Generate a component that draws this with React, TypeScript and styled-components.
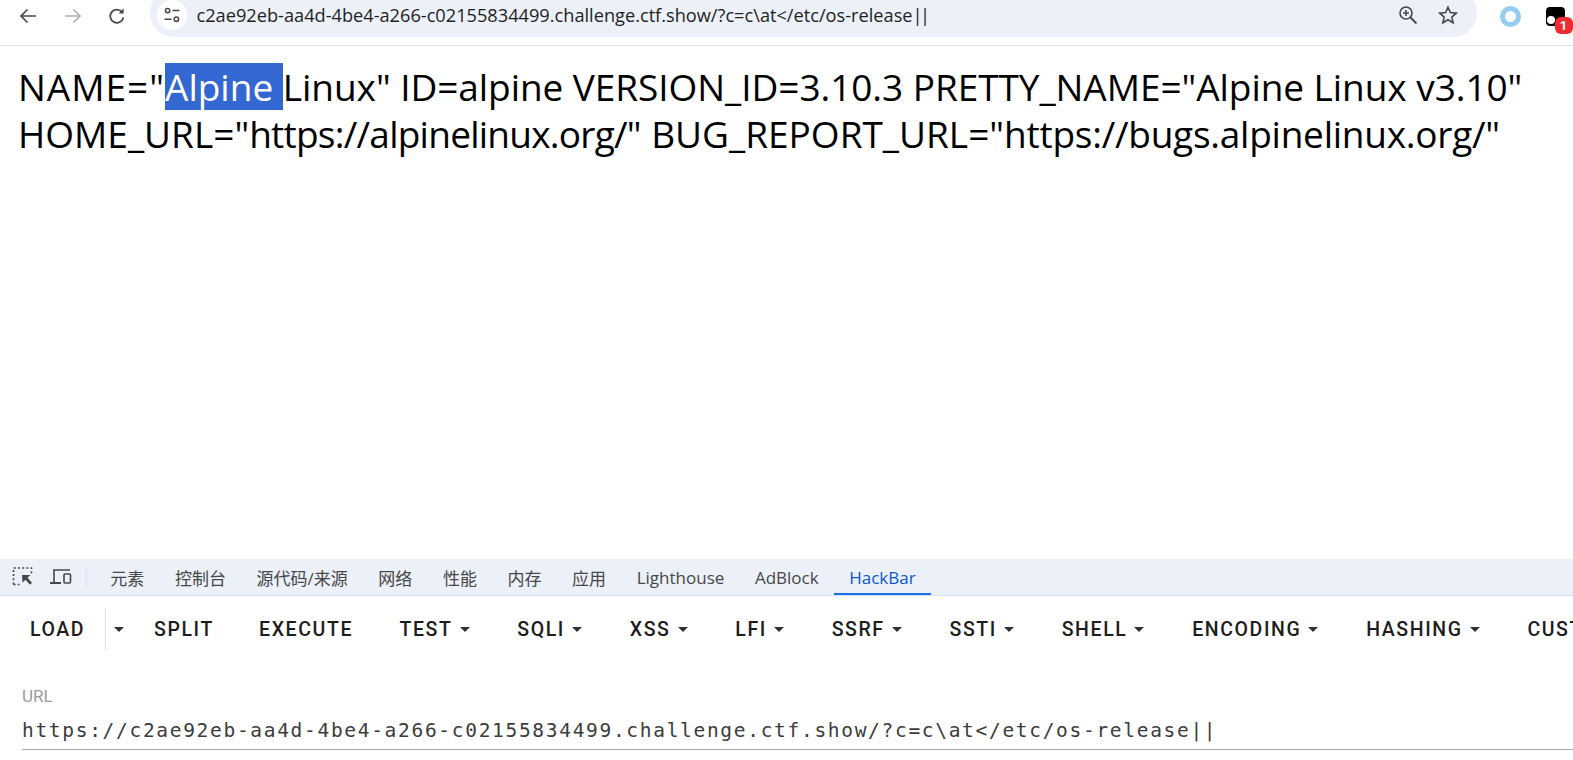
import React from "react";
import styled, { createGlobalStyle } from "styled-components";

const URL_TEXT = "c2ae92eb-aa4d-4be4-a266-c02155834499.challenge.ctf.show/?c=c\\at</etc/os-release||";

const TABS = ["元素", "控制台", "源代码/来源", "网络", "性能", "内存", "应用", "Lighthouse", "AdBlock", "HackBar"];

const MENU = [
  { label: "SPLIT" },
  { label: "EXECUTE" },
  { label: "TEST", caret: true },
  { label: "SQLI", caret: true },
  { label: "XSS", caret: true },
  { label: "LFI", caret: true },
  { label: "SSRF", caret: true },
  { label: "SSTI", caret: true },
  { label: "SHELL", caret: true },
  { label: "ENCODING", caret: true },
  { label: "HASHING", caret: true },
  { label: "CUSTOM", caret: true },
];

const App = () => {
  return (
    <>
      <GlobalStyle />
      <Page>
        <Toolbar>
          <NavIcon>
            <svg width="20" height="20" viewBox="0 0 20 20" fill="none" stroke="#474747" strokeWidth="1.7">
              <path d="M18 10H3M9.5 3.5 3 10l6.5 6.5" />
            </svg>
          </NavIcon>
          <NavIcon>
            <svg width="20" height="20" viewBox="0 0 20 20" fill="none" stroke="#b0b0b0" strokeWidth="1.7">
              <path d="M2 10h15M10.5 3.5 17 10l-6.5 6.5" />
            </svg>
          </NavIcon>
          <NavIcon>
            <svg width="20" height="20" viewBox="0 0 20 20" fill="none" stroke="#474747" strokeWidth="1.7">
              <path d="M16.3 11.5a6.6 6.6 0 1 1-1.4-5.6" />
              <path d="M16.6 2.5v5h-5z" fill="#474747" stroke="none" />
            </svg>
          </NavIcon>
          <AddressBar>
            <SiteChip>
              <svg width="18" height="18" viewBox="0 0 18 18" fill="none" stroke="#474747" strokeWidth="1.5">
                <circle cx="4.6" cy="4.6" r="2.2" />
                <path d="M9.5 4.6h7M1.5 13.2h7" />
                <circle cx="13.4" cy="13.2" r="2.2" />
              </svg>
            </SiteChip>
            <AddressText>
              {URL_TEXT.slice(0, -2)}
              <Tracked $spacing={-2.5}>||</Tracked>
            </AddressText>
            <BarIcon>
              <svg width="20" height="20" viewBox="0 0 20 20" fill="none" stroke="#474747" strokeWidth="1.6">
                <circle cx="8" cy="8" r="6" />
                <path d="M12.5 12.5 18.5 18.5" strokeWidth="1.8" />
                <path d="M5 8h6M8 5v6" />
              </svg>
            </BarIcon>
            <BarIcon>
              <svg width="20" height="20" viewBox="0 0 20 20" fill="none" stroke="#474747" strokeWidth="1.6">
                <path d="M10 2.2l2.4 5.4 5.8.6-4.4 3.9 1.3 5.7-5.1-3-5.1 3 1.3-5.7-4.4-3.9 5.8-.6z" />
              </svg>
            </BarIcon>
          </AddressBar>
          <Extensions>
            <RingIcon />
            <BlackExtension>
              <Hole />
              <Badge>1</Badge>
            </BlackExtension>
          </Extensions>
        </Toolbar>

        <Content>
          <Tracked $spacing={1}>NAME="</Tracked>
          <Selected>Alpine </Selected>
          <Tracked $spacing={-0.06}>Linux" ID=alpine VERSION_ID=3.10.3 PRETTY_NAME="Alpine Linux v3.10"</Tracked>{" "}
          HOME_URL="<Tracked $spacing={-0.75}>https://alpinelinux.org/</Tracked>" BUG_REPORT_URL="
          <Tracked $spacing={-0.25}>https://bugs.alpinelinux.org/</Tracked>"
        </Content>

        <DevTools>
          <TabBar>
            <ToolIcons>
              <svg width="22" height="22" viewBox="0 0 22 22" fill="none" stroke="#474747">
                <path d="M1.5 18.5v-16.5h18v6" strokeWidth="1.6" strokeDasharray="2 2.2" />
                <path d="M1.5 18.5h6" strokeWidth="1.6" strokeDasharray="2 2.2" />
                <path d="M10 9h8.5l-3 2.8 4.5 5-2 2-4.5-5-3 3z" fill="#474747" stroke="none" />
              </svg>
              <svg width="24" height="22" viewBox="0 0 24 22" fill="none" stroke="#474747" strokeWidth="1.6">
                <path d="M5 16V4h16" />
                <path d="M1 17h11" strokeWidth="2" />
                <rect x="15" y="8" width="6.5" height="9" rx="1" />
              </svg>
            </ToolIcons>
            <TabDivider />
            {TABS.map((tab) => (
              <Tab key={tab} $active={tab === "HackBar"}>
                {tab}
              </Tab>
            ))}
          </TabBar>

          <ButtonRow>
            <LoadButton>LOAD</LoadButton>
            <SplitCaret>
              <Caret />
            </SplitCaret>
            {MENU.map((item) => (
              <MenuButton key={item.label} $plain={!item.caret}>
                {item.label}
                {item.caret && <Caret />}
              </MenuButton>
            ))}
          </ButtonRow>

          <UrlField>
            <UrlLabel>URL</UrlLabel>
            <UrlValue>https://{URL_TEXT}</UrlValue>
          </UrlField>
        </DevTools>
      </Page>
    </>
  );
};

const GlobalStyle = createGlobalStyle`
  html, body {
    margin: 0;
    padding: 0;
    background: #fff;
    overflow: hidden;
  }
`;

const Page = styled.div`
  width: 1573px;
  height: 760px;
  display: flex;
  flex-direction: column;
  overflow: hidden;
  font-family: "Open Sans", "Noto Sans CJK SC", sans-serif;
`;

const Toolbar = styled.div`
  flex: none;
  height: 45px;
  display: flex;
  align-items: flex-start;
  padding-left: 6px;
  border-bottom: 1px solid #e3e3e3;
`;

const NavIcon = styled.div`
  width: 44.5px;
  height: 31px;
  display: flex;
  align-items: center;
  justify-content: center;
`;

/* the pill runs off the top of the window, as in the real browser */
const AddressBar = styled.div`
  flex: none;
  width: 1327px;
  height: 48px;
  margin: -11px 0 0 10px;
  padding: 11px 9px 0 7px;
  display: flex;
  align-items: center;
  background: #ebf0f9;
  border-radius: 24px;
  box-sizing: border-box;
`;

const SiteChip = styled.div`
  width: 30px;
  height: 30px;
  margin-bottom: 7px;
  border-radius: 50%;
  background: #fff;
  display: flex;
  align-items: center;
  justify-content: center;
  flex: none;
`;

const AddressText = styled.div`
  flex: 1;
  margin: 0 0 7px 10px;
  font-size: 18.2px;
  color: #1f1f1f;
  white-space: nowrap;
`;

const BarIcon = styled.div`
  width: 40px;
  height: 24px;
  margin-bottom: 7px;
  display: flex;
  align-items: center;
  justify-content: center;
`;

const Extensions = styled.div`
  flex: 1;
  display: flex;
  align-items: center;
  height: 32px;
`;

const RingIcon = styled.div`
  width: 21px;
  height: 21px;
  margin-left: 23px;
  box-sizing: border-box;
  border-radius: 50%;
  border: 5px solid #93cdf3;
  background: #fff;
`;

const BlackExtension = styled.div`
  position: relative;
  width: 19px;
  height: 19px;
  margin-left: 25px;
  background: #000;
  border-radius: 4px;
`;

const Hole = styled.div`
  position: absolute;
  left: 1px;
  top: 9px;
  width: 8px;
  height: 8px;
  border-radius: 50%;
  background: #fff;
`;

const Badge = styled.div`
  position: absolute;
  left: 9px;
  top: 10px;
  width: 18px;
  height: 17px;
  border-radius: 6px;
  background: #ee2b2f;
  color: #fff;
  font-family: "Roboto", sans-serif;
  font-weight: 700;
  font-size: 13px;
  line-height: 17px;
  text-align: center;
`;

const Content = styled.div`
  flex: 1;
  min-height: 0;
  padding: 17px 40px 0 18px;
  font-size: 37px;
  line-height: 46.5px;
  color: #000;
`;

const Tracked = styled.span<{ $spacing: number }>`
  letter-spacing: ${(p) => p.$spacing}px;
`;

const Selected = styled.span`
  display: inline-block;
  white-space: pre;
  line-height: 47px;
  background: #3367d1;
  color: #fff;
`;

const DevTools = styled.div`
  flex: none;
  height: 201px;
  display: flex;
  flex-direction: column;
`;

const TabBar = styled.div`
  flex: none;
  height: 37px;
  display: flex;
  align-items: stretch;
  background: #ebf0f9;
  border-bottom: 1px solid #d3e3fd;
  box-sizing: border-box;
  padding-left: 11.5px;
`;

const ToolIcons = styled.div`
  display: flex;
  align-items: center;
  gap: 15px;
`;

const TabDivider = styled.div`
  width: 1px;
  height: 22px;
  margin: 7px 8px 0 13.5px;
  background: #d3e3fd;
`;

const Tab = styled.div<{ $active?: boolean }>`
  padding: 0 15.3px;
  display: flex;
  align-items: center;
  font-size: 17px;
  white-space: nowrap;
  color: ${(p) => (p.$active ? "#0b57d0" : "#474747")};
  box-shadow: ${(p) => (p.$active ? "inset 0 -2px 0 #1a6ff0" : "none")};
`;

const ButtonRow = styled.div`
  flex: none;
  height: 55px;
  margin-top: 12px;
  padding-left: 6.1px;
  display: flex;
  align-items: flex-start;
  white-space: nowrap;
  overflow: hidden;
`;

const MenuButton = styled.div<{ $plain?: boolean }>`
  flex: none;
  height: 43px;
  padding: 0 ${(p) => (p.$plain ? "22.6px" : "23.9px")};
  display: flex;
  align-items: center;
  font-family: "Roboto", sans-serif;
  font-weight: 500;
  font-size: 19.5px;
  letter-spacing: 1.6px;
  color: #1d1d1d;
`;

const LoadButton = styled(MenuButton)`
  padding-right: 20.2px;
`;

const SplitCaret = styled.div`
  flex: none;
  height: 43px;
  width: 26px;
  display: flex;
  align-items: center;
  justify-content: center;
  border-left: 1px solid #e2e2e2;
  box-sizing: border-box;
`;

const Caret = styled.span`
  flex: none;
  width: 0;
  height: 0;
  margin-left: 7px;
  border-left: 5.5px solid transparent;
  border-right: 5.5px solid transparent;
  border-top: 5.5px solid #333;

  ${SplitCaret} & {
    margin-left: 0;
  }
`;

const UrlField = styled.div`
  margin: 24px 0 0 22px;
  border-bottom: 1px solid #a9a9a9;
  height: 62px;
`;

const UrlLabel = styled.div`
  font-family: "Roboto", sans-serif;
  font-size: 17px;
  line-height: 18px;
  color: #9a9a9a;
`;

const UrlValue = styled.div`
  margin-top: 12px;
  font-family: "DejaVu Sans Mono", monospace;
  font-size: 19.5px;
  letter-spacing: 1.69px;
  line-height: 28px;
  color: #3c3c3c;
  white-space: nowrap;
`;

export default App;
